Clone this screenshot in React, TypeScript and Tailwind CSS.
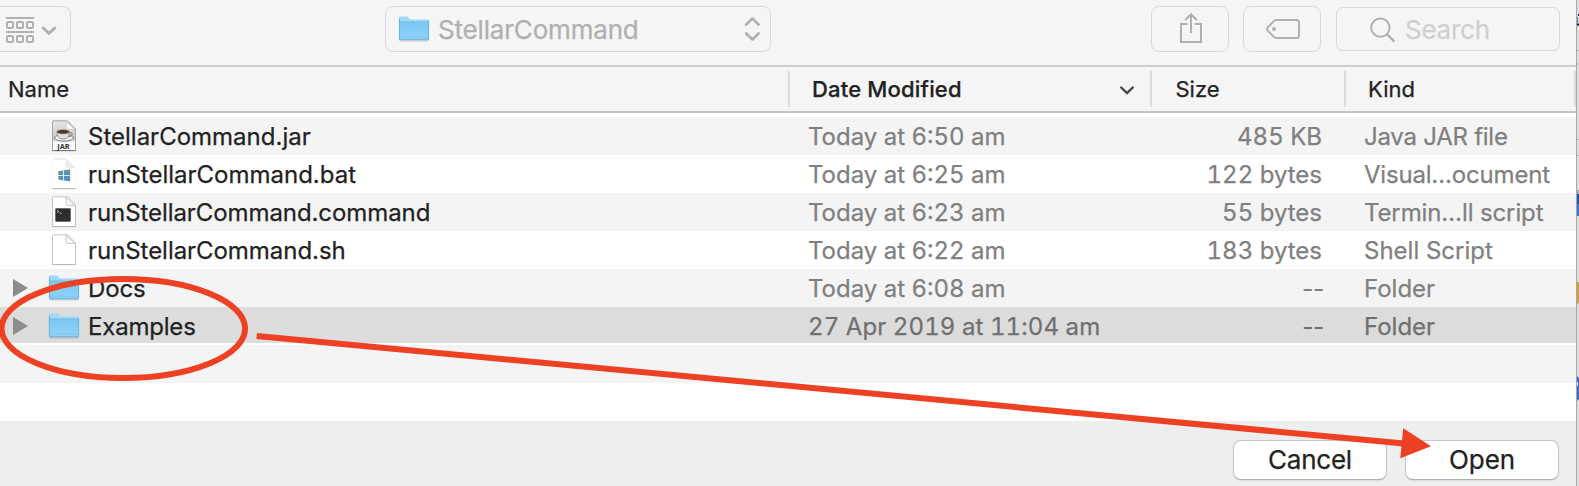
type IconKind = "jar" | "bat" | "command" | "sh" | "folder";

interface Entry {
  name: string;
  date: string;
  size: string;
  kind: string;
  icon: IconKind;
  nameClass?: string;
  dateClass?: string;
  kindClass?: string;
  selected?: boolean;
}

const entries: Entry[] = [
  { name: "StellarCommand.jar", date: "Today at 6:50 am", size: "485 KB", kind: "Java JAR file", icon: "jar", kindClass: "tracking-[-0.25px]" },
  { name: "runStellarCommand.bat", date: "Today at 6:25 am", size: "122 bytes", kind: "Visual…ocument", icon: "bat", kindClass: "tracking-[-0.2px]" },
  { name: "runStellarCommand.command", date: "Today at 6:23 am", size: "55 bytes", kind: "Termin…ll script", icon: "command", nameClass: "tracking-[-0.08px]", kindClass: "tracking-[-0.12px]" },
  { name: "runStellarCommand.sh", date: "Today at 6:22 am", size: "183 bytes", kind: "Shell Script", icon: "sh", nameClass: "tracking-[-0.05px]" },
  { name: "Docs", date: "Today at 6:08 am", size: "--", kind: "Folder", icon: "folder", nameClass: "tracking-[-0.1px]" },
  { name: "Examples", date: "27 Apr 2019 at 11:04 am", size: "--", kind: "Folder", icon: "folder", nameClass: "tracking-[-0.2px]", dateClass: "tracking-[0.08px]", selected: true },
];

function Folder({ className = "" }: { className?: string }) {
  return (
    <svg width="32" height="26" viewBox="0 0 32 26" className={className}>
      <defs>
        <linearGradient id="folderFront" x1="0" y1="0" x2="0" y2="1">
          <stop offset="0" stopColor="#7cc8f4" />
          <stop offset="1" stopColor="#8fd2f8" />
        </linearGradient>
      </defs>
      <path d="M1.5 24.8h29" stroke="#000" strokeOpacity=".16" strokeWidth="1.4" />
      <path d="M1 2q0-1.4 1.4-1.4h6.4q1 0 1.7 1l.9 1.4q.5.6 1.4.6h16.8q1.4 0 1.4 1.4v18q0 1-1 1H2q-1 0-1-1z" fill="#a0d8f7" />
      <path d="M1 6h30v17q0 1-1 1H2q-1 0-1-1z" fill="url(#folderFront)" />
      <path d="M1 6h30" stroke="#6cb6e0" strokeWidth=".8" />
      <path d="M1 21.2h30" stroke="#79c2ec" strokeWidth=".7" />
      <path d="M1.4 2.5V23q0 .7.8.7h27.6q.8 0 .8-.7V4.6" fill="none" stroke="#62abd6" strokeWidth=".8" />
    </svg>
  );
}

function FileIcon({ kind }: { kind: IconKind }) {
  if (kind === "folder") return <Folder className="-ml-[3px]" />;
  return (
    <svg width="26" height="32" viewBox="0 0 26 32">
      <defs>
        <linearGradient id="jarBody" x1="0" y1="0" x2="0" y2="1">
          <stop offset="0" stopColor="#e4e4e4" />
          <stop offset=".6" stopColor="#cdcdcd" />
          <stop offset=".74" stopColor="#fafafa" />
          <stop offset="1" stopColor="#fff" />
        </linearGradient>
      </defs>
      <path
        d="M2 .8h14.5L24.5 9v21.5h-23V1.3z"
        fill={kind === "jar" ? "url(#jarBody)" : "#fff"}
        stroke={kind === "jar" ? "#a5a5a5" : kind === "bat" ? "#fbfbfb" : "#c2c2c2"}
        strokeWidth="1"
      />
      {kind === "bat" && <path d="M3 1h12" stroke="#dedede" strokeWidth="1" />}
      <path d="M1.5 30.6h23" stroke={kind === "jar" ? "#777" : "#b7b7b7"} strokeWidth="1.1" />
      <path
        d="M15 1.2v6.600q0 1.700 1.700 1.700H24z"
        fill={kind === "bat" ? "#eee" : "#f8f8f8"}
        stroke={kind === "bat" ? "#e8e8e8" : "#c4c4c4"}
        strokeWidth=".9"
      />
      {kind === "jar" && (
        <>
          <ellipse cx="13" cy="17.800" rx="9.500" ry="3.400" fill="#eee" stroke="#7d7d7d" strokeWidth="1" />
          <path d="M6 12c0 5 3 7 6 7s6.300-2 6.300-7z" fill="#e2e2e2" stroke="#858585" strokeWidth=".8" />
          <path d="M18.300 13c4-1.500 4 3.500-1 3.800" fill="none" stroke="#888" strokeWidth="1.200" />
          <ellipse cx="12.100" cy="11.800" rx="6.400" ry="2.300" fill="#4a3a22" stroke="#b0b0b0" strokeWidth=".8" />
          <text x="12.500" y="29.300" textAnchor="middle" fontSize="7.400" fontWeight="700" fill="#333" fontFamily="Open Sans, sans-serif" textLength="12.500" lengthAdjust="spacingAndGlyphs">JAR</text>
        </>
      )}
      {kind === "bat" && (
        <path fill="#5a93b3" d="M7.300 13.300l4.700-.8v4.500H7.300zM12.800 12.300l6.400-.9V17h-6.400zM7.300 17.800H12v4.600l-4.700-.8zM12.800 17.800h6.400v5.700l-6.400-.9z" />
      )}
      {kind === "command" && (
        <>
          <rect x="4.500" y="12.500" width="15" height="13" rx=".8" fill="#2d2d2d" stroke="#555" strokeWidth=".6" />
          <path d="M6 14.300l2 1.200-2 1.200M8.800 17.200h2" fill="none" stroke="#ccc" strokeWidth=".8" />
        </>
      )}
    </svg>
  );
}

function Toolbar() {
  return (
    <div className="flex h-[65px] shrink-0 items-start pt-[6px]">
      <div className="flex h-[46px] w-[71px] shrink-0 rounded-r-[8px] border border-l-0 border-[#dadada]">
        <svg width="70" height="44" viewBox="0 7 70 44" fill="none" stroke="#b0b0b0">
          <path d="M6 18h28M6 32h28" strokeWidth="2" />
          {[7, 17, 27].map((x) => (
            <g key={x} strokeWidth="2">
              <rect x={x} y="22" width="6" height="6" rx="1" />
              <rect x={x} y="36" width="6" height="6" rx="1" />
            </g>
          ))}
          <path d="M43.200 28l5.800 5.300L54.800 28" strokeWidth="3" strokeLinecap="round" />
        </svg>
      </div>
      <div className="ml-[314px] flex h-[46px] w-[386px] shrink-0 items-center rounded-[8px] border border-[#dadada] pl-[12px] pr-[10px]">
        <Folder />
        <span className="ml-[8px] text-[26px] tracking-[-0.18px] text-[#b0b0b0]">StellarCommand</span>
        <svg className="ml-auto" width="16" height="26" viewBox="0 0 16 26" fill="none" stroke="#b0b0b0" strokeWidth="2.600" strokeLinecap="round" strokeLinejoin="round">
          <path d="M2.200 8.500L8.400 2.500l6.200 6M2.200 17.500l6.200 6 6.200-6" />
        </svg>
      </div>
      <div className="ml-[380px] flex h-[46px] w-[78px] shrink-0 items-center justify-center rounded-[8px] border border-[#dadada] pl-[2px]">
        <svg width="24" height="32" viewBox="0 0 24 32" fill="none" stroke="#b0b0b0" strokeWidth="2">
          <path d="M8.500 11H2v18h20V11h-6.500M12 20V1.500M6.200 7L12 1.300 17.800 7" />
        </svg>
      </div>
      <div className="ml-[14px] flex h-[46px] w-[78px] shrink-0 items-center justify-center rounded-[8px] border border-[#dadada] pl-[2px]">
        <svg width="36" height="22" viewBox="0 0 36 22" fill="none" stroke="#b0b0b0" strokeWidth="2">
          <path d="M11.500 2H31.500q2.500 0 2.500 2.500v13q0 2.500-2.500 2.500h-20q-1.500 0-2.600-1.100L2.700 12.600q-1.400-1.600 0-3.200L8.900 3.100Q10 2 11.500 2z" />
          <circle cx="9" cy="11" r="2" fill="#b0b0b0" stroke="none" />
        </svg>
      </div>
      <div className="ml-[15px] mt-px flex h-[44px] w-[224px] shrink-0 items-center rounded-[7px] border border-[#dadada] pl-[32px]">
        <svg width="27" height="28" viewBox="0 0 27 28" fill="none" stroke="#b0b0b0" strokeWidth="2">
          <circle cx="11.400" cy="12.600" r="9.200" />
          <path d="M17.900 19.100l7.500 7.500" strokeWidth="2.300" />
        </svg>
        <span className="ml-[9px] text-[26px] tracking-[-0.25px] text-[#d0d0d0]">Search</span>
      </div>
    </div>
  );
}

function ColumnHeader() {
  return (
    <div className="flex h-[48px] shrink-0 items-center border-y-2 border-t-[#cecece] border-b-[#c4c4c4] text-[22px] leading-[44px] text-[#222]">
      <div className="w-[788px] shrink-0 pl-[8px]">Name</div>
      <div className="flex h-[36px] w-[362px] shrink-0 items-center border-l-2 border-[#dcdcdc] pl-[22px] pr-[15px]">
        <span className="font-medium tracking-[0.18px]">Date Modified</span>
        <svg className="ml-auto mt-[3px]" width="16" height="11" viewBox="0 0 16 11" fill="none" stroke="#444" strokeWidth="2.400" strokeLinecap="round">
          <path d="M2.200 2.500L8 8l5.800-5.500" />
        </svg>
      </div>
      <div className="flex h-[36px] w-[194px] shrink-0 items-center border-l-2 border-[#dcdcdc] pl-[23.500px]">Size</div>
      <div className="flex h-[36px] w-[232px] shrink-0 items-center border-x-2 border-[#dcdcdc] pl-[22px]">Kind</div>
    </div>
  );
}

function Row({ entry, index }: { entry: Entry; index: number }) {
  const tone = entry.selected
    ? "bg-[#dcdcdc] border-b-2 border-white text-[#707070]"
    : index % 2 === 0
      ? "bg-[#f4f4f4] text-[#808080]"
      : "bg-white text-[#808080]";
  return (
    <div className={`flex h-[38px] shrink-0 items-start whitespace-nowrap leading-[40px] ${tone}`}>
      <div className="flex h-[38px] w-[51px] shrink-0 items-center pl-[13px]">
        {entry.icon === "folder" && (
          <svg width="15" height="18" viewBox="0 0 15 18">
            <path d="M0 0l15 9-15 9z" fill="#8d8d8d" />
          </svg>
        )}
      </div>
      <div className="flex h-[38px] w-[37px] shrink-0 items-center">
        <FileIcon kind={entry.icon} />
      </div>
      <div className={`h-[36px] w-[720px] shrink-0 text-[#222] ${entry.nameClass ?? ""}`}>{entry.name}</div>
      <div className={`h-[36px] w-[341px] shrink-0 tabular-nums ${entry.dateClass ?? ""}`}>{entry.date}</div>
      {entry.size === "--" ? (
        <div className="h-[36px] w-[175px] shrink-0 text-right tracking-[-0.2px]">{entry.size}</div>
      ) : (
        <div className="h-[36px] w-[173px] shrink-0 text-right tabular-nums">{entry.size}</div>
      )}
      <div className={`ml-auto h-[36px] w-[212px] ${entry.kindClass ?? ""}`}>{entry.kind}</div>
    </div>
  );
}

function BackgroundSliver() {
  return (
    <div className="flex w-[3px] shrink-0 overflow-hidden border-l border-[#a6a6a6] bg-[#dedede]">
      <svg width="2" height="486" viewBox="0 0 2 486">
        <path d="M1 15h1M0 24.500h2" stroke="#182238" strokeWidth="2" />
        <path d="M0 17h1v6H0z" fill="#5b85b5" />
        <path d="M0 50.500h2M0 64h2M0 139.500h2M0 155.500h2" stroke="#bcbcbc" />
        <path d="M0 190h2v4H0z" fill="#a8a8a8" />
        <path d="M0 194h2v10H0z" fill="#2c50a8" />
        <path d="M0 204h2v12H0z" fill="#3f6fd0" />
        <path d="M0 282h2v20l-2 3z" fill="#d0a03c" />
        <path d="M0 376l2 2v21l-2 2z" fill="#3d68c4" />
        <path d="M0 382h1v4H0z" fill="#dedede" />
      </svg>
    </div>
  );
}

export default function App() {
  return (
    <div className="relative flex h-[486px] w-[1579px] overflow-hidden font-['Inter',sans-serif] [-webkit-text-stroke:0.25px_currentColor]">
      <div className="flex w-[1576px] shrink-0 flex-col bg-[#f5f5f5]">
        <Toolbar />
        <ColumnHeader />
        <div className="flex h-[308px] shrink-0 flex-col bg-white pt-[4px] text-[24px]">
          {entries.map((entry, i) => (
            <Row key={entry.name} entry={entry} index={i} />
          ))}
          <div className="h-[38px] shrink-0 bg-[#f4f4f4]" />
        </div>
        <div className="flex grow items-start justify-end gap-[18px] bg-[#eee] pr-[17px] pt-[19px] text-[26px] text-[#222]">
          <button className="h-[40px] w-[154px] rounded-[8px] border border-[#c6c6c6] border-b-[#b0b0b0] bg-white leading-[38px] tracking-[-0.25px] shadow-[0_1px_1px_rgba(0,0,0,0.08)]">Cancel</button>
          <button className="h-[40px] w-[154px] rounded-[8px] border border-[#c6c6c6] border-b-[#b0b0b0] bg-white leading-[38px] tracking-[-0.1px] shadow-[0_1px_1px_rgba(0,0,0,0.08)]">Open</button>
        </div>
      </div>
      <BackgroundSliver />
      <svg className="pointer-events-none absolute inset-0" width="1579" height="486" viewBox="0 0 1579 486">
        <ellipse cx="123.300" cy="328.500" rx="121.800" ry="49.500" fill="none" stroke="#ee4023" strokeWidth="6" />
        <path d="M256.700 336L1404 443.500" stroke="#ee4023" strokeWidth="6" />
        <path d="M1403.200 428.300L1431 446.300l-30.700 11.900z" fill="#ee4023" />
      </svg>
    </div>
  );
}
